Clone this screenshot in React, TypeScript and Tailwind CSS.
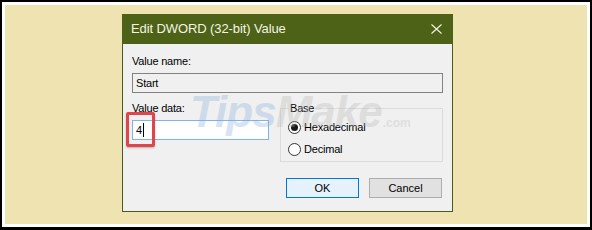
import React from "react";

const F = { fontFamily: '"Liberation Sans", Arial, sans-serif' };

function Radio({ checked, label }: { checked?: boolean; label: string }) {
  return (
    <div className="flex h-[14px] items-center">
      <span className="ml-[7px] flex h-[13px] w-[13px] items-center justify-center rounded-full border border-[#333333] bg-white">
        {checked && <span className="h-[7px] w-[7px] rounded-full bg-[#1a1a1a]" />}
      </span>
      <span className="ml-[3px] text-[11px] leading-[14px] tracking-[-0.2px] text-black">{label}</span>
    </div>
  );
}

export default function App() {
  return (
    <div style={F} className="flex h-[230px] w-[592px] flex-col border-t-[2px] border-l-[2px] border-r-[2px] border-b-[3px] border-black bg-white p-[3px]">
      <div className="relative flex-1 bg-[#efe3b2] pl-[117px] pt-[9px]">
        <div className="flex h-[198px] w-[331px] flex-col">
          <div className="flex h-[30px] items-center justify-between bg-[#4d6217] pl-[9px] pr-[10px]">
            <span className="text-[13px] tracking-[-0.1px] text-[#f4f4e6]">Edit DWORD (32-bit) Value</span>
            <svg width="11" height="10" viewBox="0 0 11 10" className="mr-[1px]">
              <path d="M0.5 0.5 L10.5 9.5 M10.5 0.5 L0.5 9.5" stroke="#f4f4e6" strokeWidth="1.1" />
            </svg>
          </div>
          <div className="flex flex-1 flex-col border-x border-b border-[#4a5c1c] bg-[#f0f0f0] px-[9px] pt-[10px]">
            <div className="h-[14px] text-[11px] leading-[14px] tracking-[-0.2px] text-black">Value name:</div>
            <div className="mt-[5px] flex h-[20px] items-center border border-[#828282] bg-[#f0f0f0] pl-[3px] text-[11px] tracking-[-0.2px] text-black">
              Start
            </div>
            <div className="mt-[8px] flex">
              <div className="flex w-[137px] flex-col">
                <div className="h-[14px] text-[11px] leading-[14px] tracking-[-0.2px] text-black">Value data:</div>
                <div className="mt-[5px] flex h-[20px] items-center border border-[#7eb4ea] bg-white pl-[3px] text-[11px] text-black">
                  <span>4</span>
                  <span className="ml-[1px] h-[14px] w-[1px] bg-black" />
                </div>
              </div>
              <fieldset className="ml-[11px] flex h-[61px] w-[163px] flex-col border border-[#dcdcdc] pl-[8px]">
                <legend className="px-[1px] text-[11px] leading-[14px] tracking-[-0.2px] text-black">Base</legend>
                <div className="-ml-[8px] mt-[5px]">
                  <Radio checked label="Hexadecimal" />
                </div>
                <div className="-ml-[8px] mt-[8px]">
                  <Radio label="Decimal" />
                </div>
              </fieldset>
            </div>
            <div className="mt-[16px] flex justify-end gap-[10px] pr-[1px]">
              <button className="flex h-[20px] w-[73px] items-center justify-center border border-[#0078d7] bg-[#e5f1fb] text-[11px] text-black">
                OK
              </button>
              <button className="flex h-[20px] w-[73px] items-center justify-center border border-[#adadad] bg-[#e1e1e1] text-[11px] text-black">
                Cancel
              </button>
            </div>
          </div>
        </div>

        <div className="pointer-events-none absolute left-[185px] top-[82px] flex items-baseline opacity-30">
          <span className="text-[44px] font-extrabold italic leading-[50px] tracking-[-1px] text-[#7fa9da]">Tips</span>
          <span className="text-[44px] font-extrabold italic leading-[50px] tracking-[-1px] text-[#b4b4b4]">Make</span>
          <span className="ml-[1px] text-[12px] font-bold leading-[12px] text-[#b8b8b8]">.com</span>
        </div>

        <div className="pointer-events-none absolute left-[121px] top-[107px] h-[35px] w-[29px] rounded-[2px] border-[3px] border-[#e0454b] shadow-[0_1px_2px_rgba(0,0,0,0.25)]" />
      </div>
    </div>
  );
}
